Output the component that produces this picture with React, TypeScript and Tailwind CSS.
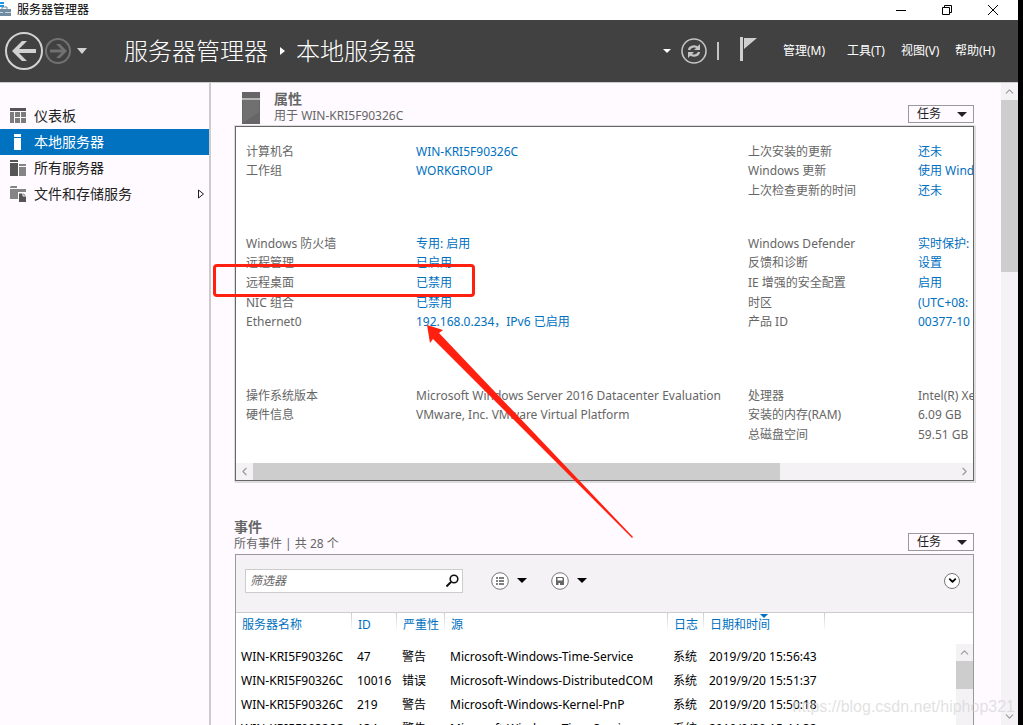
import React from 'react';
import { ChevronDown, ChevronLeft, ChevronRight, ChevronUp } from 'lucide-react';

interface Property {
    label: string;
    value: string;
    plain?: boolean;
}

type PropertyRow = [Property | null, Property | null];

interface EventItem {
    id: string;
    severity: string;
    source: string;
    date: string;
}

const SERVER = 'WIN-KRI5F90326C';

const networkRows: PropertyRow[] = [
    [{ label: 'Windows 防火墙', value: '专用: 启用' }, { label: 'Windows Defender', value: '实时保护:' }],
    [{ label: '远程管理', value: '已启用' }, { label: '反馈和诊断', value: '设置' }],
    [{ label: '远程桌面', value: '已禁用' }, { label: 'IE 增强的安全配置', value: '启用' }],
    [{ label: 'NIC 组合', value: '已禁用' }, { label: '时区', value: '(UTC+08:' }],
    [{ label: 'Ethernet0', value: '192.168.0.234，IPv6 已启用' }, { label: '产品 ID', value: '00377-10' }],
];

const computerRows: PropertyRow[] = [
    [{ label: '计算机名', value: SERVER }, { label: '上次安装的更新', value: '还未' }],
    [{ label: '工作组', value: 'WORKGROUP' }, { label: 'Windows 更新', value: '使用 Wind' }],
    [null, { label: '上次检查更新的时间', value: '还未' }],
];

const hardwareRows: PropertyRow[] = [
    [
        { label: '操作系统版本', value: 'Microsoft Windows Server 2016 Datacenter Evaluation', plain: true },
        { label: '处理器', value: 'Intel(R) Xe', plain: true },
    ],
    [
        { label: '硬件信息', value: 'VMware, Inc. VMware Virtual Platform', plain: true },
        { label: '安装的内存(RAM)', value: '6.09 GB', plain: true },
    ],
    [null, { label: '总磁盘空间', value: '59.51 GB', plain: true }],
];

const events: EventItem[] = [
    { id: '47', severity: '警告', source: 'Microsoft-Windows-Time-Service', date: '2019/9/20 15:56:43' },
    { id: '10016', severity: '错误', source: 'Microsoft-Windows-DistributedCOM', date: '2019/9/20 15:51:37' },
    { id: '219', severity: '警告', source: 'Microsoft-Windows-Kernel-PnP', date: '2019/9/20 15:50:18' },
    { id: '134', severity: '警告', source: 'Microsoft-Windows-Time-Service', date: '2019/9/20 15:44:32' },
];

const PropertyCells = ({ item }: { item: Property | null }) => {
    if (!item) {
        return (
            <>
                <dt />
                <dd />
            </>
        );
    }
    return (
        <>
            <dt>{item.label}</dt>
            <dd>
                {item.plain ? item.value : (
                    <a href="#" className="text-[#0070c0] hover:underline">{item.value}</a>
                )}
            </dd>
        </>
    );
};

const PropertyGroup = ({ rows, className }: { rows: PropertyRow[]; className: string }) => (
    <dl className={`grid auto-rows-fr grid-cols-[170px_332px_170px_max-content] items-center whitespace-nowrap ${className}`}>
        {rows.map(([left, right], index) => (
            <React.Fragment key={index}>
                <PropertyCells item={left} />
                <PropertyCells item={right} />
            </React.Fragment>
        ))}
    </dl>
);

const Caret = ({ className = '' }: { className?: string }) => (
    <svg viewBox="0 0 10 5" className={`h-[5px] w-[10px] ${className}`} fill="currentColor">
        <path d="M0 0h10L5 5z" />
    </svg>
);

const TasksButton = () => (
    <button className="flex h-[18px] w-[66px] items-center justify-between border border-[#999] pr-1.5 pl-2 text-[#222]">
        任务
        <Caret />
    </button>
);

const TitleBar = () => (
    <div className="flex h-5 shrink-0 items-center justify-between bg-white text-black">
        <div className="flex items-center gap-1.5">
            <svg viewBox="0 0 11 16" className="h-4 w-[11px]">
                <path d="M0 0h4v2H0zM0 3h4v2H0z" fill="#1c97ea" />
                <path d="M0 7h11v7H0z" fill="#6f8ca3" />
                <path d="M2 7V5h5v2" stroke="#6f8ca3" fill="none" />
                <path d="M0 10.5h3m2 0h6" stroke="#c9d6e0" />
            </svg>
            <span>服务器管理器</span>
        </div>
        <div className="flex items-center gap-9 pr-5">
            <button aria-label="最小化">
                <svg viewBox="0 0 10 10" className="size-2.5" stroke="currentColor"><path d="M0 5.5h10" /></svg>
            </button>
            <button aria-label="还原">
                <svg viewBox="0 0 10 10" className="size-2.5" stroke="currentColor" fill="none">
                    <path d="M.5 2.5h7v7h-7zM2.5 2.5v-2h7v7h-2" />
                </svg>
            </button>
            <button aria-label="关闭">
                <svg viewBox="0 0 10 10" className="size-2.5" stroke="currentColor"><path d="M0 0l10 10M10 0L0 10" /></svg>
            </button>
        </div>
    </div>
);

const Header = () => (
    <header className="flex h-[63px] shrink-0 items-center justify-between border-b border-[#ccc] bg-[#414141] text-white">
        <div className="flex items-center">
            <button aria-label="后退" className="ml-[5px]">
                <svg viewBox="0 0 38 38" className="size-[38px]" fill="none" stroke="#d2d2d2">
                    <circle cx="19" cy="19" r="18" strokeWidth="2" />
                    <path d="M31 19H10" strokeWidth="4" />
                    <path d="M22 9h-5l-10 10 10 10h5l-10-10z" fill="#d2d2d2" stroke="none" />
                </svg>
            </button>
            <button aria-label="前进" className="ml-0.5">
                <svg viewBox="0 0 26 26" className="size-[26px]" fill="none" stroke="#717171">
                    <circle cx="13" cy="13" r="12" strokeWidth="2" />
                    <path d="M5 13h14" strokeWidth="3" />
                    <path d="M11 6h4l7 7-7 7h-4l7-7z" fill="#717171" stroke="none" />
                </svg>
            </button>
            <button aria-label="历史记录" className="ml-1.5">
                <svg viewBox="0 0 10 6" className="h-1.5 w-2.5"><path d="M0 0h10L5 6z" fill="#d2d2d2" /></svg>
            </button>
            <nav className="ml-[37px] flex items-center text-2xl font-light">
                <span>服务器管理器</span>
                <svg viewBox="0 0 5 8" className="mr-[11px] ml-3 h-2 w-[5px]"><path d="M0 0l5 4-5 4z" fill="#fff" /></svg>
                <span>本地服务器</span>
            </nav>
        </div>
        <div className="flex items-center pr-[21px]">
            <svg viewBox="0 0 8 4" className="h-1 w-2"><path d="M0 0h8L4 4z" fill="#fff" /></svg>
            <button aria-label="刷新" className="ml-2.5">
                <svg viewBox="0 0 26 26" className="size-[26px]" fill="none" stroke="#c4c4c4">
                    <circle cx="13" cy="13" r="12" strokeWidth="1.6" />
                    <path d="M8 12c.5-3.500 6-5 9-2M18 14c-.5 3.500-6 5-9 2" strokeWidth="2.200" />
                    <path d="M19 6v6h-6zM7 20v-6h6z" fill="#c4c4c4" stroke="none" />
                </svg>
            </button>
            <span className="ml-2.5 h-[18px] w-0.5 bg-[#c4c4c4]" />
            <button aria-label="通知" className="ml-[21px]">
                <svg viewBox="0 0 17 30" className="h-[30px] w-[17px]" fill="#cfcfcf">
                    <path d="M0 1h3v24H0zM4 2h13L4 13z" />
                </svg>
            </button>
            <div className="ml-[26px] flex">
                <button className="w-16 text-left">管理(M)</button>
                <button className="w-[54px] text-left">工具(T)</button>
                <button className="w-[54px] text-left">视图(V)</button>
                <button className="w-[42px] text-left">帮助(H)</button>
            </div>
        </div>
    </header>
);

const Sidebar = () => (
    <aside className="w-[211px] shrink-0 border-r-2 border-[#ccc] pt-5 text-sm text-[#222]">
        <a href="#" className="flex h-[26px] items-center gap-2 pl-2.5">
            <svg viewBox="0 0 16 16" className="size-4" fill="#7c7c7c">
                <path d="M0 0h16v3H0z" fill="#555" />
                <path d="M0 4h4v11H0zM5 4h5v5H5zM11 4h5v5h-5zM5 10h5v5H5zM11 10h5v5h-5z" />
            </svg>
            仪表板
        </a>
        <a href="#" className="flex h-[26px] items-center gap-2 bg-[#0072c0] pl-2.5 text-white">
            <svg viewBox="0 0 16 16" className="size-4" fill="#fff"><path d="M4 0h7v3H4zM4 4h7v12H4z" /></svg>
            本地服务器
        </a>
        <a href="#" className="flex h-[26px] items-center gap-2 pl-2.5">
            <svg viewBox="0 0 16 16" className="size-4" fill="#555">
                <path d="M0 0h8v2H0zM0 3h8v13H0z" />
                <path d="M9 4h7v2H9zM9 7h7v9H9z" fill="#858585" />
            </svg>
            所有服务器
        </a>
        <a href="#" className="flex h-[26px] items-center gap-2 pr-1 pl-2.5">
            <svg viewBox="0 0 16 16" className="size-4" fill="#858585">
                <path d="M1 0h6v2H0V1zM0 3h16v3H8v7H0z" />
                <path d="M9 7h4l3 3v6H9z" fill="#555" />
                <path d="M8 7h5v3h3" fill="none" stroke="#fff" />
            </svg>
            文件和存储服务
            <svg viewBox="0 0 8 10" className="ml-auto h-2.5 w-2" fill="none" stroke="#222">
                <path d="M1.500 1l5 4-5 4z" />
            </svg>
        </a>
    </aside>
);

const PropertiesSection = () => (
    <section>
        <div className="flex h-[43px] items-end justify-between">
            <div className="flex items-end gap-3.5 pb-0.5 pl-[7px]">
                <svg viewBox="0 0 18 32" className="h-8 w-[18px]">
                    <path d="M0 0h18v32H0z" fill="#666" />
                    <path d="M1 8h16v12L1 31z" fill="#707070" />
                    <path d="M0 6h18v2H0z" fill="#b5b5b5" />
                </svg>
                <div>
                    <h2 className="text-sm leading-[18px] font-bold">属性</h2>
                    <p className="leading-4">用于 {SERVER}</p>
                </div>
            </div>
            <div className="pb-[3px]"><TasksButton /></div>
        </div>
        <div className="overflow-hidden border border-[#666] bg-white shadow-[0_0_0_1px_#ddd,1px_1px_0_1px_#ddd]">
            <div className="overflow-hidden pt-[15px] pb-[18px] pl-2.5">
                <PropertyGroup rows={computerRows} className="h-[59px]" />
                <PropertyGroup rows={networkRows} className="mt-[33px] h-[98px]" />
                <PropertyGroup rows={hardwareRows} className="mt-[54px] h-[59px]" />
            </div>
            <div className="flex h-[17px] items-center justify-between bg-[#f5f2f5] text-[#999]">
                <ChevronLeft className="w-[17px]" size={13} />
                <div className="h-full w-[527px] bg-[#cdcdcd]" />
                <ChevronRight className="ml-auto w-[17px]" size={13} />
            </div>
        </div>
    </section>
);

const headerCell = 'bg-[linear-gradient(#ccc,transparent)] bg-[length:1px_18px] bg-right-top bg-no-repeat pt-0.5 pl-1.5 text-left align-top font-normal leading-5';

const EventsSection = () => (
    <section className="mt-[37px] flex min-h-0 flex-1 flex-col">
        <div className="flex shrink-0 items-end justify-between pb-[3px]">
            <div className="-mb-px -ml-px">
                <h2 className="text-sm leading-[18px] font-bold">事件</h2>
                <p className="leading-4">所有事件 | 共 28 个</p>
            </div>
            <TasksButton />
        </div>
        <div className="flex min-h-0 flex-1 flex-col border border-b-0 border-[#999] bg-white">
            <div className="flex h-[58px] shrink-0 items-center border-b border-[#ccc] bg-[#f5f2f5] pr-[13px] pb-1.5 pl-[9px]">
                <div className="flex h-6 w-[218px] items-center border border-[#ccc] bg-white pr-[3px]">
                    <input
                        aria-label="筛选器"
                        placeholder="筛选器"
                        className="min-w-0 flex-1 px-1 italic outline-none placeholder:text-[#666]"
                    />
                    <svg viewBox="0 0 13 13" className="size-[13px]" fill="none" stroke="#111" strokeWidth="2">
                        <circle cx="8" cy="5" r="3.800" strokeWidth="1.600" />
                        <path d="M5 8l-4.500 4.500" />
                    </svg>
                </div>
                <button aria-label="分组" className="ml-7 flex items-center gap-2 text-black">
                    <svg viewBox="0 0 18 18" className="size-[18px]" fill="none" stroke="#777">
                        <circle cx="9" cy="9" r="8.300" fill="#fff" />
                        <path d="M5 6h2m1 0h5M5 9h2m1 0h5M5 12h2m1 0h5" stroke="#555" strokeWidth="1.600" />
                    </svg>
                    <Caret />
                </button>
                <button aria-label="保存" className="ml-6 flex items-center gap-2 text-black">
                    <svg viewBox="0 0 18 18" className="size-[18px]" fill="none" stroke="#777">
                        <circle cx="9" cy="9" r="8.300" fill="#fff" />
                        <path d="M5 5h7l1 1v7H5z" fill="#666" stroke="none" />
                        <path d="M6.500 6h5v2.500h-5zM7.500 11h1.500v2H7.500z" fill="#fff" stroke="none" />
                    </svg>
                    <Caret />
                </button>
                <button aria-label="展开" className="ml-auto flex size-4 items-center justify-center rounded-full border border-[#777] bg-white text-black">
                    <ChevronDown size={11} strokeWidth={4} />
                </button>
            </div>
            <div className="flex min-h-0 flex-1 overflow-hidden">
                <table className="w-full table-fixed self-start whitespace-nowrap text-black">
                    <thead className="text-[#0070c0]">
                        <tr className="h-8">
                            <th className={`w-[116px] ${headerCell}`}>服务器名称</th>
                            <th className={`w-[45px] ${headerCell}`}>ID</th>
                            <th className={`w-12 ${headerCell}`}>严重性</th>
                            <th className={`w-[223px] ${headerCell}`}>源</th>
                            <th className={`w-9 ${headerCell}`}>日志</th>
                            <th className={`relative w-[121px] ${headerCell}`}>
                                日期和时间
                                <svg viewBox="0 0 8 4" className="absolute top-px left-14 h-1 w-2" fill="currentColor">
                                    <path d="M0 0h8L4 4z" />
                                </svg>
                            </th>
                            <th />
                        </tr>
                    </thead>
                    <tbody>
                        {events.map((event) => (
                            <tr key={event.date} className="h-6">
                                <td className="pl-[5px]">{SERVER}</td>
                                <td className="pl-[5px]">{event.id}</td>
                                <td className="pl-[5px]">{event.severity}</td>
                                <td className="pl-[5px]">{event.source}</td>
                                <td className="pl-[5px]">系统</td>
                                <td className="pl-[5px]">{event.date}</td>
                                <td />
                            </tr>
                        ))}
                    </tbody>
                </table>
                <div className="mt-[31px] flex w-[17px] shrink-0 flex-col items-center bg-[#f5f2f5] text-[#999]">
                    <ChevronUp className="h-[17px]" size={13} />
                    <div className="h-7 w-full bg-[#cdcdcd]" />
                </div>
            </div>
        </div>
    </section>
);

// Red marker around the remote desktop row and the arrow pointing at it
const Annotation = () => (
    <>
        <div className="pointer-events-none absolute top-[264px] left-[213px] h-[33px] w-[262px] rounded-sm border-3 border-[#ff2010]" />
        <svg viewBox="0 0 208 216" className="pointer-events-none absolute top-[323px] left-[426px] h-[216px] w-[208px]" fill="#ff2010">
            <path d="M1 2l16 5-4 3 194 204-1 1L7 16l-3 4z" />
        </svg>
    </>
);

export default function App() {
    return (
        <div className="relative flex h-screen overflow-hidden bg-black pr-[5px] font-['Noto_Sans','Noto_Sans_CJK_SC',sans-serif] text-xs text-[#666]">
            <div className="flex min-w-0 flex-1 flex-col bg-[#fefaff]">
                <TitleBar />
                <Header />
                <div className="flex min-h-0 flex-1">
                    <Sidebar />
                    <main className="flex min-w-0 flex-1 flex-col pr-[27px] pl-6">
                        <PropertiesSection />
                        <EventsSection />
                    </main>
                    <div className="flex w-[17px] shrink-0 flex-col items-center bg-[#f5f2f5] text-[#999]">
                        <ChevronUp className="h-[17px] shrink-0" size={13} />
                        <div className="h-[172px] w-full bg-[#cdcdcd]" />
                        <ChevronDown className="mt-auto h-[17px] shrink-0" size={13} />
                    </div>
                </div>
            </div>
            <Annotation />
            <span className="pointer-events-none absolute right-2 bottom-1.5 font-['Liberation_Sans',sans-serif] text-base leading-6 text-[#d4d4d4]/70">
                https://blog.csdn.net/hiphop321
            </span>
        </div>
    );
}
